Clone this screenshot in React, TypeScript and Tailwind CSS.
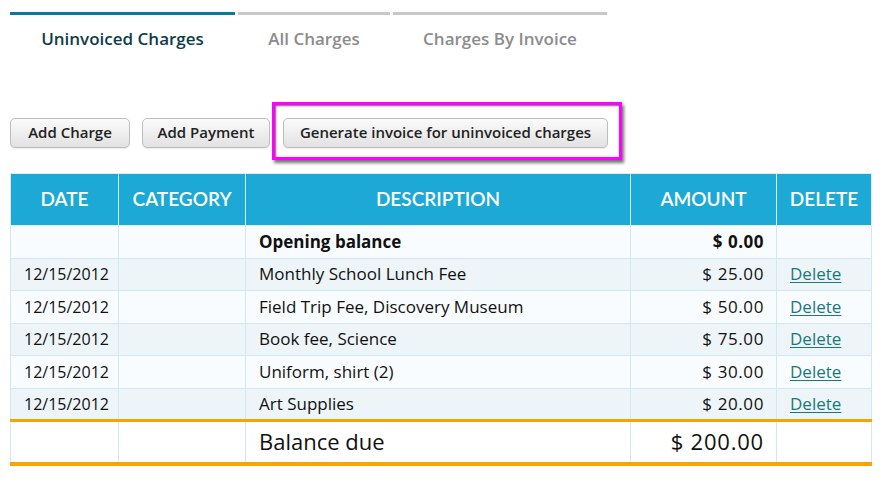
const rows = [
  { date: "12/15/2012", desc: "Monthly School Lunch Fee", amount: "$ 25.00", h: "h-[32px]" },
  { date: "12/15/2012", desc: "Field Trip Fee, Discovery Museum", amount: "$ 50.00", h: "h-[33px]" },
  { date: "12/15/2012", desc: "Book fee, Science", amount: "$ 75.00", h: "h-[32px]" },
  { date: "12/15/2012", desc: "Uniform, shirt (2)", amount: "$ 30.00", h: "h-[33px]" },
  { date: "12/15/2012", desc: "Art Supplies", amount: "$ 20.00", h: "h-[32px]" },
];

const btn =
  "h-[30px] rounded-[5px] border border-[#bdbdbd] bg-gradient-to-b from-[#fbfbfb] to-[#e2e2e2] px-3 text-[15px] font-semibold text-[#222] shadow-[0_1px_1px_rgba(0,0,0,0.08)]";

export default function App() {
  return (
    <div className="min-h-[480px] bg-white pl-[10px] font-['Open_Sans','Lato',sans-serif] text-[#111]">
      <nav className="flex gap-[3px] pt-[12px]">
        <div className="w-[225px] border-t-[3px] border-[#0a7a9c] pt-[11px] text-center text-[17px] font-semibold text-[#0f3c4c]">
          Uninvoiced Charges
        </div>
        <div className="w-[152px] border-t-[3px] border-[#c8c8c8] pt-[11px] text-center text-[17px] font-semibold text-[#8c8c8c]">
          All Charges
        </div>
        <div className="w-[214px] border-t-[3px] border-[#c8c8c8] pt-[11px] text-center text-[17px] font-semibold text-[#8c8c8c]">
          Charges By Invoice
        </div>
      </nav>

      <div className="mt-[50px] flex items-start">
        <button className={`${btn} mt-[16px] w-[120px]`}>Add Charge</button>
        <button className={`${btn} mt-[16px] ml-[12px] w-[128px]`}>Add Payment</button>
        <div className="ml-[2px] border-[3px] border-[#ff00ff] pt-[13px] pb-[9px] pl-[8px] pr-[11px] shadow-[2px_3px_3px_rgba(0,0,0,0.55),inset_1px_1px_2px_rgba(0,0,0,0.6)]">
          <button className={`${btn} w-[325px]`}>Generate invoice for uninvoiced charges</button>
        </div>
      </div>

      <table className="mt-[13px] w-[862px] border-collapse border border-[#cfe8f1] text-[17px]">
        <thead>
          <tr className="h-[52px] bg-[#1ca9d6] font-['Lato',sans-serif] text-[19px] text-white">
            <th className="w-[108px] border border-[#d8eef6] font-semibold">DATE</th>
            <th className="w-[127px] border border-[#d8eef6] font-semibold">CATEGORY</th>
            <th className="w-[385px] border border-[#d8eef6] font-semibold">DESCRIPTION</th>
            <th className="w-[146px] border border-[#d8eef6] font-semibold">AMOUNT</th>
            <th className="border border-[#d8eef6] font-semibold">DELETE</th>
          </tr>
        </thead>
        <tbody>
          <tr className="h-[33px] bg-[#f9fcfe]">
            <td className="border border-[#cfe8f1]"></td>
            <td className="border border-[#cfe8f1]"></td>
            <td className="border border-[#cfe8f1] pl-[13px] font-bold">Opening balance</td>
            <td className="border border-[#cfe8f1] pr-[12px] text-right font-bold tracking-[0.5px]">$ 0.00</td>
            <td className="border border-[#cfe8f1]"></td>
          </tr>
          {rows.map((r, i) => (
            <tr key={i} className={`${r.h} ${i % 2 === 0 ? "bg-[#edf5f8]" : "bg-[#f9fcfe]"}`}>
              <td className="border border-[#cfe8f1] pl-[13px] text-[16px]">{r.date}</td>
              <td className="border border-[#cfe8f1]"></td>
              <td className="border border-[#cfe8f1] pl-[13px]">{r.desc}</td>
              <td className="border border-[#cfe8f1] pr-[12px] text-right tracking-[0.6px]">{r.amount}</td>
              <td className="border border-[#cfe8f1] pl-[13px]">
                <a href="#" className="text-[#19787a] underline underline-offset-2">
                  Delete
                </a>
              </td>
            </tr>
          ))}
          <tr className="h-[44px] border-t-[3px] border-b-4 border-t-[#f7a400] border-b-[#f7a400] bg-white text-[22px]">
            <td className="border-x border-x-[#cfe8f1]"></td>
            <td className="border-x border-x-[#cfe8f1]"></td>
            <td className="border-x border-x-[#cfe8f1] pl-[13px]">Balance due</td>
            <td className="border-x border-x-[#cfe8f1] pr-[12px] text-right tracking-[0.8px]">$ 200.00</td>
            <td className="border-x border-x-[#cfe8f1]"></td>
          </tr>
        </tbody>
      </table>
    </div>
  );
}
